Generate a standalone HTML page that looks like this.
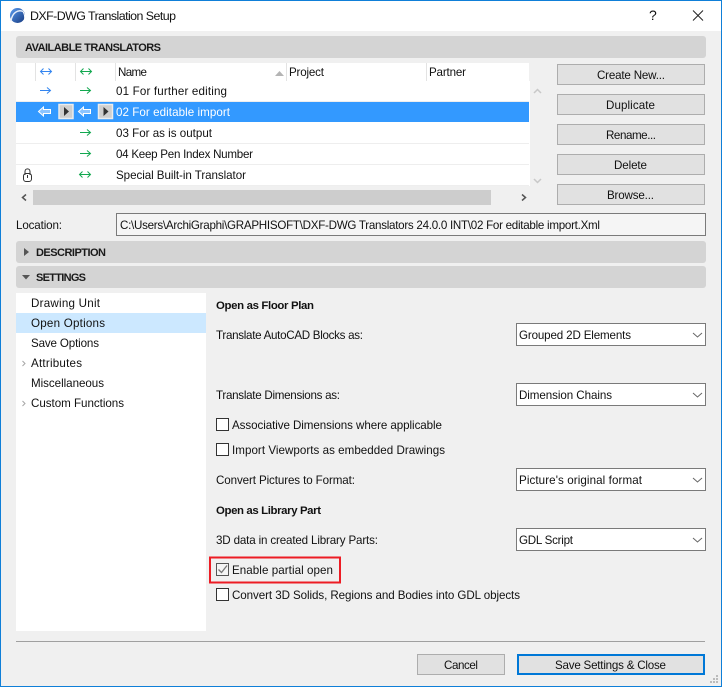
<!DOCTYPE html>
<html><head><meta charset="utf-8"><title>DXF-DWG Translation Setup</title>
<style>
html,body{margin:0;padding:0;background:#f0f0f0;width:722px;height:687px;overflow:hidden}
svg{display:block}
text{font-family:"Liberation Sans",Arial,sans-serif;font-size:11.6px;fill:#111}
.b{font-weight:bold;font-size:11.4px}
.c{font-weight:bold;font-size:11px;fill:#1a1a1a}
.w{fill:#fff}
</style></head><body>
<svg width="722" height="687" viewBox="0 0 722 687" xmlns="http://www.w3.org/2000/svg">
<defs><linearGradient id="lg" x1="0" y1="0" x2="1" y2="1"><stop offset="0" stop-color="#5b9cf0"/><stop offset="1" stop-color="#173a80"/></linearGradient></defs>
<rect width="722" height="687" fill="#f0f0f0"/>
<rect x="0" y="0" width="722" height="31" fill="#fff"/>
<rect x="0.5" y="0.5" width="721" height="686" fill="none" stroke="#0f7fd8"/>
<!-- logo -->
<circle cx="17.500" cy="15.500" r="7.500" fill="url(#lg)"/>
<path d="M11 21C12 13 18 9 23 11.500" fill="none" stroke="#e6eefa" stroke-width="1.500"/>
<path d="M23 11.500C24.500 14 25 17 24.500 20" fill="none" stroke="#fff" stroke-width="1"/>
<text x="30" y="20" textLength="146" style="font-size:12.4px">DXF-DWG Translation Setup</text>
<text x="649" y="20" style="font-size:14px">?</text>
<path d="M693 10.500L703 20.500M703 10.500L693 20.500" stroke="#222" stroke-width="1" fill="none"/>

<!-- headers -->
<rect x="16" y="36" width="690" height="22" rx="3" fill="#d4d4d4"/>
<text x="25" y="51" textLength="136" class="c">AVAILABLE TRANSLATORS</text>

<!-- list -->
<rect x="16" y="63" width="513" height="123" fill="#fff"/>
<rect x="529" y="81" width="1" height="105" fill="#fff"/>
<rect x="16" y="102" width="513" height="20" fill="#3399ff"/>
<rect x="16" y="143" width="513" height="1" fill="#eeeeee"/>
<rect x="16" y="164" width="513" height="1" fill="#eeeeee"/>
<rect x="16" y="185" width="513" height="1" fill="#eeeeee"/>
<rect x="16" y="101" width="513" height="1" fill="#eeeeee"/>
<rect x="35" y="63" width="1" height="18" fill="#e3e3e3"/>
<rect x="75" y="63" width="1" height="18" fill="#e3e3e3"/>
<rect x="115" y="63" width="1" height="18" fill="#e3e3e3"/>
<rect x="286" y="63" width="1" height="18" fill="#e3e3e3"/>
<rect x="426" y="63" width="1" height="18" fill="#e3e3e3"/>
<path d="M275 76L284 76L279.500 71Z" fill="#b4b4b4"/>
<text x="118" y="76" textLength="29">Name</text>
<text x="289" y="76" textLength="35">Project</text>
<text x="429" y="76" textLength="37">Partner</text>

<g fill="none" stroke-width="1">
<path d="M41 71.500H51M43.500 68.500L40.500 71.500L43.500 74.500M48.500 68.500L51.500 71.500L48.500 74.500" stroke="#3385f0"/>
<path d="M81 71.500H91M83.500 68.500L80.500 71.500L83.500 74.500M88.500 68.500L91.500 71.500L88.500 74.500" stroke="#12a84f"/>
<path d="M40 90.500H50M47 87.500L50.500 90.500L47 93.500" stroke="#3385f0"/>
<path d="M80 90.500H90M87 87.500L90.500 90.500L87 93.500" stroke="#12a84f"/>
<path d="M80 132.500H90M87 129.500L90.500 132.500L87 135.500" stroke="#12a84f"/>
<path d="M80 153.500H90M87 150.500L90.500 153.500L87 156.500" stroke="#12a84f"/>
<path d="M80 174.500H90M82.500 171.500L79.500 174.500L82.500 177.500M87.500 171.500L90.500 174.500L87.500 177.500" stroke="#12a84f"/>
</g>
<!-- white left arrows -->
<path d="M38.500 111.500L43.500 107V109.500H50.500V113.500H43.500V116Z" fill="#8cc4ff" stroke="#fff"/>
<path d="M78.500 111.500L83.500 107V109.500H90.500V113.500H83.500V116Z" fill="#8cc4ff" stroke="#fff"/>
<rect x="59" y="104.500" width="14" height="14" fill="#cfcfcf" stroke="#ececec" stroke-width="1.500"/>
<path d="M64 107L69 111.500L64 116Z" fill="#333"/>
<rect x="98.500" y="104.500" width="14" height="14" fill="#cfcfcf" stroke="#ececec" stroke-width="1.500"/>
<path d="M103.500 107L108.500 111.500L103.500 116Z" fill="#333"/>
<!-- lock -->
<rect x="23.500" y="173.500" width="8" height="8" rx="2.500" fill="#fff" stroke="#333"/>
<path d="M25 175V171.500C25 168 30 168 30 171.500V175" fill="none" stroke="#333"/>
<rect x="27" y="175" width="1" height="3" fill="#333"/>

<text x="116" y="95" textLength="111">01 For further editing</text>
<text x="116" y="116" textLength="114" class="w">02 For editable import</text>
<text x="116" y="137" textLength="96">03 For as is output</text>
<text x="116" y="158" textLength="137">04 Keep Pen Index Number</text>
<text x="116" y="179" textLength="130">Special Built-in Translator</text>

<!-- scrollbars -->
<rect x="16" y="190" width="513" height="15" fill="#f0f0f0"/>
<rect x="33" y="190" width="458" height="15" fill="#cdcdcd"/>
<path d="M26 194.500L22.500 197.500L26 200.500M522 194.500L525.500 197.500L522 200.500" fill="none" stroke="#555" stroke-width="1.500"/>
<path d="M534 93L537.500 89.500L541 93" fill="none" stroke="#c8c8c8" stroke-width="1.500"/>
<path d="M534 179L537.500 182.500L541 179" fill="none" stroke="#c8c8c8" stroke-width="1.500"/>

<!-- buttons -->
<g fill="#e1e1e1" stroke="#adadad">
<rect x="557.500" y="64.500" width="147" height="20"/>
<rect x="557.500" y="94.500" width="147" height="20"/>
<rect x="557.500" y="124.500" width="147" height="20"/>
<rect x="557.500" y="154.500" width="147" height="20"/>
<rect x="557.500" y="184.500" width="147" height="20"/>
<rect x="417.500" y="654.500" width="87" height="20"/>
</g>
<rect x="518" y="655" width="186" height="19" fill="#e1e1e1" stroke="#0078d7" stroke-width="2"/>
<text x="597" y="79" textLength="68">Create New...</text>
<text x="606" y="109" textLength="49">Duplicate</text>
<text x="606" y="139" textLength="50">Rename...</text>
<text x="614" y="169" textLength="33">Delete</text>
<text x="607" y="199" textLength="47">Browse...</text>
<text x="444" y="669" textLength="34">Cancel</text>
<text x="555" y="669" textLength="111">Save Settings &amp; Close</text>

<!-- location -->
<text x="16" y="229" textLength="46">Location:</text>
<rect x="116.500" y="213.500" width="589" height="22" fill="#f5f5f5" stroke="#7a7a7a"/>
<text x="120" y="229" textLength="480">C:\Users\ArchiGraphi\GRAPHISOFT\DXF-DWG Translators 24.0.0 INT\02 For editable import.Xml</text>

<!-- description / settings -->
<rect x="16" y="241" width="690" height="22" rx="3" fill="#d4d4d4"/>
<rect x="16" y="266" width="690" height="22" rx="3" fill="#d4d4d4"/>
<path d="M24 248V256L29 252Z" fill="#555"/>
<path d="M22 275H30L26 279.500Z" fill="#555"/>
<text x="36" y="256" textLength="70" class="c">DESCRIPTION</text>
<text x="36" y="281" textLength="50" class="c">SETTINGS</text>

<!-- left tree -->
<rect x="16" y="293" width="190" height="338" fill="#fff"/>
<rect x="16" y="313" width="190" height="20" fill="#cce8ff"/>
<text x="31" y="307" textLength="69">Drawing Unit</text>
<text x="31" y="327" textLength="74">Open Options</text>
<text x="31" y="347" textLength="68">Save Options</text>
<text x="31" y="367" textLength="51">Attributes</text>
<text x="31" y="387" textLength="73">Miscellaneous</text>
<text x="31" y="407" textLength="93">Custom Functions</text>
<path d="M22.500 361L25 363.500L22.500 366M22.500 401L25 403.500L22.500 406" fill="none" stroke="#a6a6a6"/>

<!-- right content -->
<text x="216" y="309" textLength="98" class="b">Open as Floor Plan</text>
<text x="216" y="339" textLength="147">Translate AutoCAD Blocks as:</text>
<text x="216" y="399" textLength="124">Translate Dimensions as:</text>
<text x="232" y="429" textLength="210">Associative Dimensions where applicable</text>
<text x="232" y="454" textLength="213">Import Viewports as embedded Drawings</text>
<text x="216" y="484" textLength="139">Convert Pictures to Format:</text>
<text x="216" y="514" textLength="105" class="b">Open as Library Part</text>
<text x="216" y="544" textLength="162">3D data in created Library Parts:</text>
<text x="232" y="574" textLength="101">Enable partial open</text>
<text x="232" y="599" textLength="288">Convert 3D Solids, Regions and Bodies into GDL objects</text>

<!-- dropdowns -->
<g fill="#fff" stroke="#7a7a7a">
<rect x="516.500" y="323.500" width="189" height="22"/>
<rect x="516.500" y="383.500" width="189" height="22"/>
<rect x="516.500" y="468.500" width="189" height="22"/>
<rect x="516.500" y="528.500" width="189" height="22"/>
</g>
<g fill="none" stroke="#666">
<path d="M693 333L697.500 337L702 333"/>
<path d="M693 393L697.500 397L702 393"/>
<path d="M693 478L697.500 482L702 478"/>
<path d="M693 538L697.500 542L702 538"/>
</g>
<text x="519" y="339" textLength="112">Grouped 2D Elements</text>
<text x="519" y="399" textLength="93">Dimension Chains</text>
<text x="519" y="484" textLength="123">Picture's original format</text>
<text x="519" y="544" textLength="54">GDL Script</text>

<!-- checkboxes -->
<g fill="#fff" stroke="#333">
<rect x="216.500" y="418.500" width="12" height="12"/>
<rect x="216.500" y="443.500" width="12" height="12"/>
<rect x="216.500" y="588.500" width="12" height="12"/>
</g>
<rect x="216.500" y="563.500" width="12" height="12" fill="#f4f4f4" stroke="#555"/>
<path d="M218.500 569.500L221.500 572.500L227 565.500" fill="none" stroke="#777" stroke-width="1.300"/>
<rect x="210" y="557.500" width="130" height="25" fill="none" stroke="#ed1c24" stroke-width="2"/>

<!-- footer -->
<rect x="16" y="641" width="689" height="1" fill="#a0a0a0"/>
<g fill="#bbbbbb">
<rect x="716" y="675" width="2" height="2"/>
<rect x="716" y="678" width="2" height="2"/>
<rect x="716" y="681" width="2" height="2"/>
<rect x="713" y="678" width="2" height="2"/>
<rect x="713" y="681" width="2" height="2"/>
<rect x="710" y="681" width="2" height="2"/>
</g>
</svg>
</body></html>
